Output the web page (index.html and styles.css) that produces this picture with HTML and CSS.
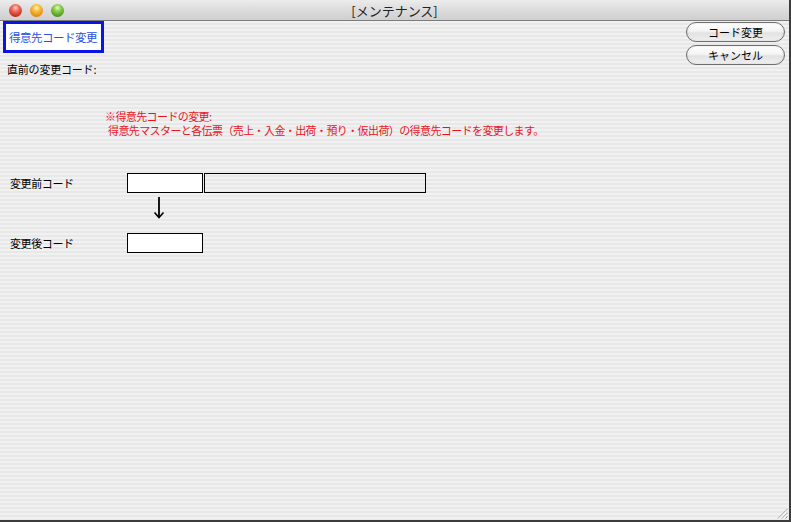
FILE: index.html
```html
<!DOCTYPE html>
<html lang="ja">
<head>
<meta charset="utf-8">
<title>[メンテナンス]</title>
<link rel="stylesheet" href="styles.css">
</head>
<body>
<div class="window">
  <div class="titlebar">
    <div class="lights">
      <span class="light red"></span>
      <span class="light yellow"></span>
      <span class="light green"></span>
    </div>
    <div class="title">[メンテナンス]</div>
    <div></div>
  </div>
  <div class="content">
    <div class="header">
      <div class="head-left">
        <div class="tab">得意先コード変更</div>
        <div class="prev">直前の変更コード:</div>
      </div>
      <div class="buttons">
        <button class="btn">コード変更</button>
        <button class="btn">キャンセル</button>
      </div>
    </div>
    <div class="note">
      <div>※得意先コードの変更:</div>
      <div class="note2">得意先マスターと各伝票（売上・入金・出荷・預り・仮出荷）の得意先コードを変更します。</div>
    </div>
    <div class="row row1">
      <div class="label">変更前コード</div>
      <div class="field"></div>
      <div class="field wide"></div>
    </div>
    <div class="arrow">
      <svg width="12" height="22" viewBox="0 0 12 22"><line x1="6" y1="0" x2="6" y2="20.5" stroke="#000" stroke-width="1.8"/><polyline points="1.5,15.5 6,20.5 10.5,15.5" fill="none" stroke="#000" stroke-width="1.6"/></svg>
    </div>
    <div class="row row2">
      <div class="label">変更後コード</div>
      <div class="field"></div>
    </div>
    <svg class="grip" width="13" height="13" viewBox="0 0 13 13"><g stroke="#8a8a8a" stroke-width="1"><line x1="3" y1="12.5" x2="12.5" y2="3"/><line x1="7" y1="12.5" x2="12.5" y2="7"/><line x1="10.5" y1="12.5" x2="12.5" y2="10.5"/></g><g stroke="#fff" stroke-width="1"><line x1="4" y1="12.5" x2="12.5" y2="4"/><line x1="8" y1="12.5" x2="12.5" y2="8"/></g></svg>
  </div>
</div>
</body>
</html>
```
FILE: styles.css
```css
html, body {
  margin: 0;
  padding: 0;
}
body {
  width: 791px;
  height: 522px;
  background: #3c3c3c;
  overflow: hidden;
  font-family: "Noto Sans CJK JP", "Noto Sans", sans-serif;
  font-size: 11px;
  color: #000;
}
.window {
  width: 789px;
  height: 520px;
  display: flex;
  flex-direction: column;
  background: #ededed;
}
.titlebar {
  height: 20px;
  flex: none;
  border-bottom: 1px solid #7d7d7d;
  background: linear-gradient(#ececec, #dcdcdc 50%, #cfcfcf);
  display: grid;
  grid-template-columns: 1fr auto 1fr;
  align-items: center;
}
.lights {
  display: flex;
  gap: 8px;
  padding-left: 9px;
}
.light {
  width: 13px;
  height: 13px;
  border-radius: 50%;
  box-sizing: border-box;
}
.light.red {
  background: radial-gradient(circle at 50% 30%, #ffd0c8 0, #f07060 30%, #c8281c 75%, #8a1a12 100%);
}
.light.yellow {
  background: radial-gradient(circle at 50% 30%, #fff0c0 0, #f8c040 30%, #e08a10 75%, #9a5a08 100%);
}
.light.green {
  background: radial-gradient(circle at 50% 30%, #e0ffc8 0, #90d050 30%, #4a9a1c 75%, #2a6010 100%);
}
.title {
  font-size: 13px;
  color: #222;
  line-height: 20px;
  padding-top: 1px;
}
.content {
  flex: 1;
  position: relative;
  background: repeating-linear-gradient(#f1f1f1 0, #f1f1f1 2px, #e8e8e8 2px, #e8e8e8 4px);
}
.header {
  display: flex;
  justify-content: space-between;
  padding: 0 4px 0 3px;
}
.tab {
  width: 92px;
  height: 26px;
  border: 3px solid #0a14e6;
  background: #fff;
  color: #2a50e0;
  line-height: 26px;
  padding-left: 3px;
  font-size: 11.5px;
  letter-spacing: -0.5px;
}
.prev {
  margin-top: 8px;
  padding-left: 4px;
  line-height: 16px;
  letter-spacing: -0.2px;
}
.buttons {
  display: flex;
  flex-direction: column;
  gap: 3px;
  margin-top: 1px;
}
.btn {
  width: 99px;
  height: 20px;
  border: 1px solid #6e6e6e;
  border-radius: 10px;
  background: linear-gradient(#ffffff, #f4f4f4 45%, #e2e2e2 55%, #f0f0f0);
  box-shadow: inset 0 0 2px rgba(0,0,0,0.15);
  font-family: "Noto Sans CJK JP", sans-serif;
  font-size: 11px;
  color: #000;
  padding: 0;
  line-height: 17px;
}
.note {
  margin-top: 32px;
  padding-left: 105px;
  color: #e8141c;
  line-height: 14px;
  letter-spacing: -0.6px;
}
.note2 {
  padding-left: 3px;
}
.row {
  display: flex;
  align-items: center;
  padding-left: 10px;
}
.row1 {
  margin-top: 36px;
}
.label {
  width: 117px;
  letter-spacing: -0.4px;
}
.field {
  width: 74px;
  height: 18px;
  border: 1px solid #000;
  background: #fff;
}
.row1 .field:first-of-type {
  border-left-width: 2px;
  width: 73px;
}
.field.wide {
  width: 220px;
  margin-left: 1px;
  background: transparent;
}
.arrow {
  margin-top: 4px;
  padding-left: 153px;
  height: 22px;
}
.arrow svg {
  display: block;
}
.row2 {
  margin-top: 14px;
}
.grip {
  position: absolute;
  right: 1px;
  bottom: 1px;
}
```
